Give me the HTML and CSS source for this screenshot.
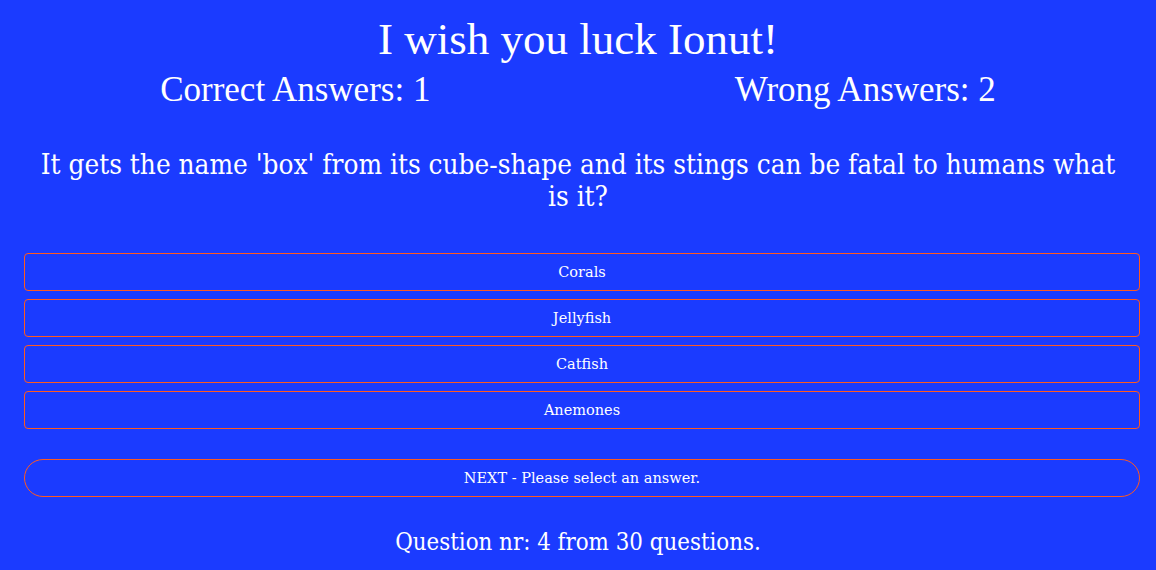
FILE: index.html
```html
<!DOCTYPE html>
<html lang="en">
<head>
<meta charset="utf-8">
<title>Quiz</title>
<link rel="stylesheet" href="styles.css">
</head>
<body>
<div class="quiz">
  <h1 class="title">I wish you luck Ionut!</h1>
  <div class="score">
    <span class="score-item">Correct Answers: 1</span>
    <span class="score-item">Wrong Answers: 2</span>
  </div>
  <h2 class="question">It gets the name 'box' from its cube-shape and its stings can be fatal to humans what is it?</h2>
  <div class="answers">
    <button class="answer">Corals</button>
    <button class="answer">Jellyfish</button>
    <button class="answer">Catfish</button>
    <button class="answer">Anemones</button>
  </div>
  <button class="next">NEXT - Please select an answer.</button>
  <p class="progress">Question nr: 4 from 30 questions.</p>
</div>
</body>
</html>
```
FILE: styles.css
```css
html, body {
  margin: 0;
  padding: 0;
  background: #1b3bff;
}
body {
  padding: 0 8px;
  color: #ffffff;
  font-family: "Liberation Serif", "DejaVu Serif", serif;
}
.quiz {
  display: flex;
  flex-direction: column;
}
.title {
  margin: 14px 0 0;
  font-size: 45px;
  font-weight: normal;
  line-height: 50px;
  text-align: center;
}
.score {
  display: flex;
  justify-content: space-around;
  margin-top: 4px;
  font-size: 35px;
  line-height: 44px;
}
.question {
  margin: 37px 20px 0;
  font-family: "DejaVu Serif Condensed", "DejaVu Serif", serif;
  font-size: 27.7px;
  font-weight: normal;
  line-height: 32px;
  text-align: center;
}
.answers {
  display: flex;
  flex-direction: column;
  gap: 8px;
  margin: 40px 8px 0 16px;
}
.answer, .next {
  height: 38px;
  background: transparent;
  color: #ffffff;
  border: 1px solid #ff5a1f;
  border-radius: 4px;
  font-family: "DejaVu Serif", serif;
  font-size: 14.5px;
  padding: 0;
  cursor: pointer;
}
.next {
  margin: 30px 8px 0 16px;
  border-radius: 19px;
}
.progress {
  margin: 29px 0 0;
  font-family: "DejaVu Serif Condensed", "DejaVu Serif", serif;
  font-size: 23.8px;
  line-height: 32px;
  text-align: center;
}
```
